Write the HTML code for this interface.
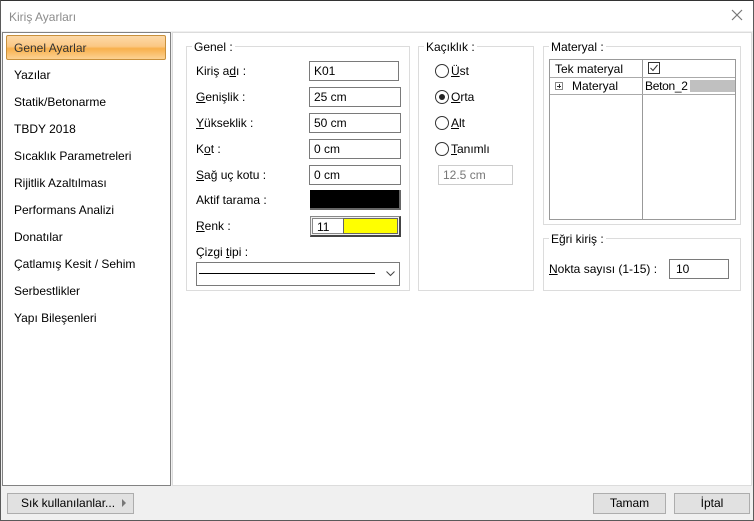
<!DOCTYPE html>
<html><head><meta charset="utf-8"><style>
*{box-sizing:border-box;margin:0;padding:0}
body{width:754px;height:521px;overflow:hidden;background:#f0f0f0;font-family:"Liberation Sans",sans-serif;font-size:12px;color:#000;position:relative}
.a{position:absolute}
.t{position:absolute;white-space:nowrap;line-height:14px}
.in{position:absolute;background:#fff;border:1px solid #7a7a7a;padding-left:4px;line-height:18px;height:20px}
.grp{position:absolute;border:1px solid #dcdcdc}
.gl{position:absolute;background:#fff;padding:0 2px;line-height:14px;white-space:nowrap}
.rd{position:absolute;width:14px;height:14px;border:1px solid #333;border-radius:50%;background:#fff}
.btn{position:absolute;background:#e1e1e1;border:1px solid #adadad;height:21px;line-height:19px;text-align:center}
u{text-decoration:underline}
</style></head><body>
<div class="a" style="left:0;top:0;width:754px;height:31px;background:#fff"></div>
<div class="t" style="left:9px;top:10px;color:#8c8c8c;font-size:12px">Kiriş Ayarları</div>
<svg class="a" style="left:731px;top:9px" width="12" height="12"><path d="M1 1L11 11M11 1L1 11" stroke="#777" stroke-width="1.2"/></svg>
<div class="a" style="left:0;top:0;width:754px;height:521px;border:1px solid #5a5a5a;border-top-color:#333"></div>

<div class="a" style="left:2px;top:32px;width:169px;height:454px;background:#fff;border:1px solid #828282"></div>
<div class="a" style="left:6px;top:35px;width:160px;height:25px;border:1px solid #c8903c;border-radius:2px;background:linear-gradient(#fcd9a8,#fbc884 45%,#f8b04c 55%,#fcd293)"></div>
<div class="t" style="left:14px;top:41px;color:#333">Genel Ayarlar</div>
<div class="t" style="left:14px;top:68px">Yazılar</div>
<div class="t" style="left:14px;top:95px">Statik/Betonarme</div>
<div class="t" style="left:14px;top:122px">TBDY 2018</div>
<div class="t" style="left:14px;top:149px">Sıcaklık Parametreleri</div>
<div class="t" style="left:14px;top:176px">Rijitlik Azaltılması</div>
<div class="t" style="left:14px;top:203px">Performans Analizi</div>
<div class="t" style="left:14px;top:230px">Donatılar</div>
<div class="t" style="left:14px;top:257px">Çatlamış Kesit / Sehim</div>
<div class="t" style="left:14px;top:284px">Serbestlikler</div>
<div class="t" style="left:14px;top:311px">Yapı Bileşenleri</div>

<div class="a" style="left:172px;top:32px;width:580px;height:454px;background:#fff;border:1px solid #dcdcdc"></div>

<div class="grp" style="left:186px;top:46px;width:224px;height:245px"></div>
<div class="gl" style="left:192px;top:40px">Genel :</div>
<div class="t" style="left:196px;top:64px">Kiriş a<u>d</u>ı :</div>
<div class="t" style="left:196px;top:90px"><u>G</u>enişlik :</div>
<div class="t" style="left:196px;top:116px"><u>Y</u>ükseklik :</div>
<div class="t" style="left:196px;top:142px">K<u>o</u>t :</div>
<div class="t" style="left:196px;top:168px"><u>S</u>ağ uç kotu :</div>
<div class="t" style="left:196px;top:193px">Aktif tarama :</div>
<div class="t" style="left:196px;top:219px"><u>R</u>enk :</div>
<div class="t" style="left:196px;top:245px">Çizgi <u>t</u>ipi :</div>
<div class="in" style="left:309px;top:61px;width:90px">K01</div>
<div class="in" style="left:309px;top:87px;width:92px">25 cm</div>
<div class="in" style="left:309px;top:113px;width:92px">50 cm</div>
<div class="in" style="left:309px;top:139px;width:92px">0 cm</div>
<div class="in" style="left:309px;top:165px;width:92px">0 cm</div>
<div class="a" style="left:310px;top:190px;width:91px;height:20px;background:#000;border-right:2px solid #666;border-bottom:2px solid #666"></div>
<div class="a" style="left:310px;top:216px;width:91px;height:21px;background:#f0f0f0;border:1px solid #888;border-right:2px solid #444;border-bottom:2px solid #444"></div>
<div class="a" style="left:312px;top:218px;width:86px;height:16px;background:#fff;border:1px solid #888"></div>
<div class="t" style="left:317px;top:220px">11</div>
<div class="a" style="left:343px;top:218px;width:55px;height:16px;background:#ffff00;border:1px solid #666"></div>
<div class="a" style="left:196px;top:262px;width:204px;height:24px;background:#fff;border:1px solid #7a7a7a"></div>
<div class="a" style="left:199px;top:273px;width:176px;height:1px;background:#000"></div>
<svg class="a" style="left:386px;top:271px" width="9" height="6"><path d="M0.5 0.5L4.5 4.5L8.5 0.5" stroke="#444" fill="none"/></svg>

<div class="grp" style="left:418px;top:46px;width:116px;height:245px"></div>
<div class="gl" style="left:424px;top:40px">Kaçıklık :</div>
<div class="rd" style="left:435px;top:64px"></div><div class="t" style="left:451px;top:64px"><u>Ü</u>st</div>
<div class="rd" style="left:435px;top:90px"></div><div class="a" style="left:439px;top:94px;width:6px;height:6px;border-radius:50%;background:#222"></div><div class="t" style="left:451px;top:90px"><u>O</u>rta</div>
<div class="rd" style="left:435px;top:116px"></div><div class="t" style="left:451px;top:116px"><u>A</u>lt</div>
<div class="rd" style="left:435px;top:142px"></div><div class="t" style="left:451px;top:142px"><u>T</u>anımlı</div>
<div class="in" style="left:438px;top:165px;width:75px;border-color:#ccc;color:#777">12.5 cm</div>

<div class="grp" style="left:543px;top:46px;width:198px;height:179px"></div>
<div class="gl" style="left:549px;top:40px">Materyal :</div>
<div class="a" style="left:549px;top:59px;width:187px;height:161px;border:1px solid #999;background:#fff"></div>
<div class="a" style="left:642px;top:60px;width:1px;height:159px;background:#999"></div>
<div class="a" style="left:550px;top:77px;width:185px;height:1px;background:#aaa"></div>
<div class="a" style="left:550px;top:94px;width:185px;height:1px;background:#aaa"></div>
<div class="t" style="left:555px;top:62px">Tek materyal</div>
<div class="a" style="left:648px;top:62px;width:12px;height:12px;border:1px solid #333"></div>
<svg class="a" style="left:649px;top:63px" width="10" height="10"><path d="M1.5 5L4 7.5L8.5 2" stroke="#333" fill="none"/></svg>
<div class="a" style="left:555px;top:82px;width:8px;height:8px;border:1px solid #888"></div>
<div class="a" style="left:557px;top:85.5px;width:4px;height:1px;background:#333"></div>
<div class="a" style="left:558.5px;top:84px;width:1px;height:4px;background:#333"></div>
<div class="t" style="left:572px;top:79px">Materyal</div>
<div class="t" style="left:645px;top:79px;letter-spacing:-0.3px">Beton_2</div>
<div class="a" style="left:690px;top:80px;width:45px;height:12px;background:#c0c0c0"></div>

<div class="grp" style="left:543px;top:238px;width:198px;height:53px"></div>
<div class="gl" style="left:549px;top:232px">Eğri kiriş :</div>
<div class="t" style="left:549px;top:262px"><u>N</u>okta sayısı (1-15) :</div>
<div class="in" style="left:669px;top:259px;width:60px;padding-left:6px">10</div>

<div class="btn" style="left:7px;top:493px;width:127px;text-align:left;padding-left:13px">Sık kullanılanlar...</div>
<svg class="a" style="left:122px;top:499px" width="5" height="8"><path d="M0 0L4 4L0 8Z" fill="#777"/></svg>
<div class="btn" style="left:593px;top:493px;width:73px">Tamam</div>
<div class="btn" style="left:674px;top:493px;width:76px">İptal</div>
</body></html>
